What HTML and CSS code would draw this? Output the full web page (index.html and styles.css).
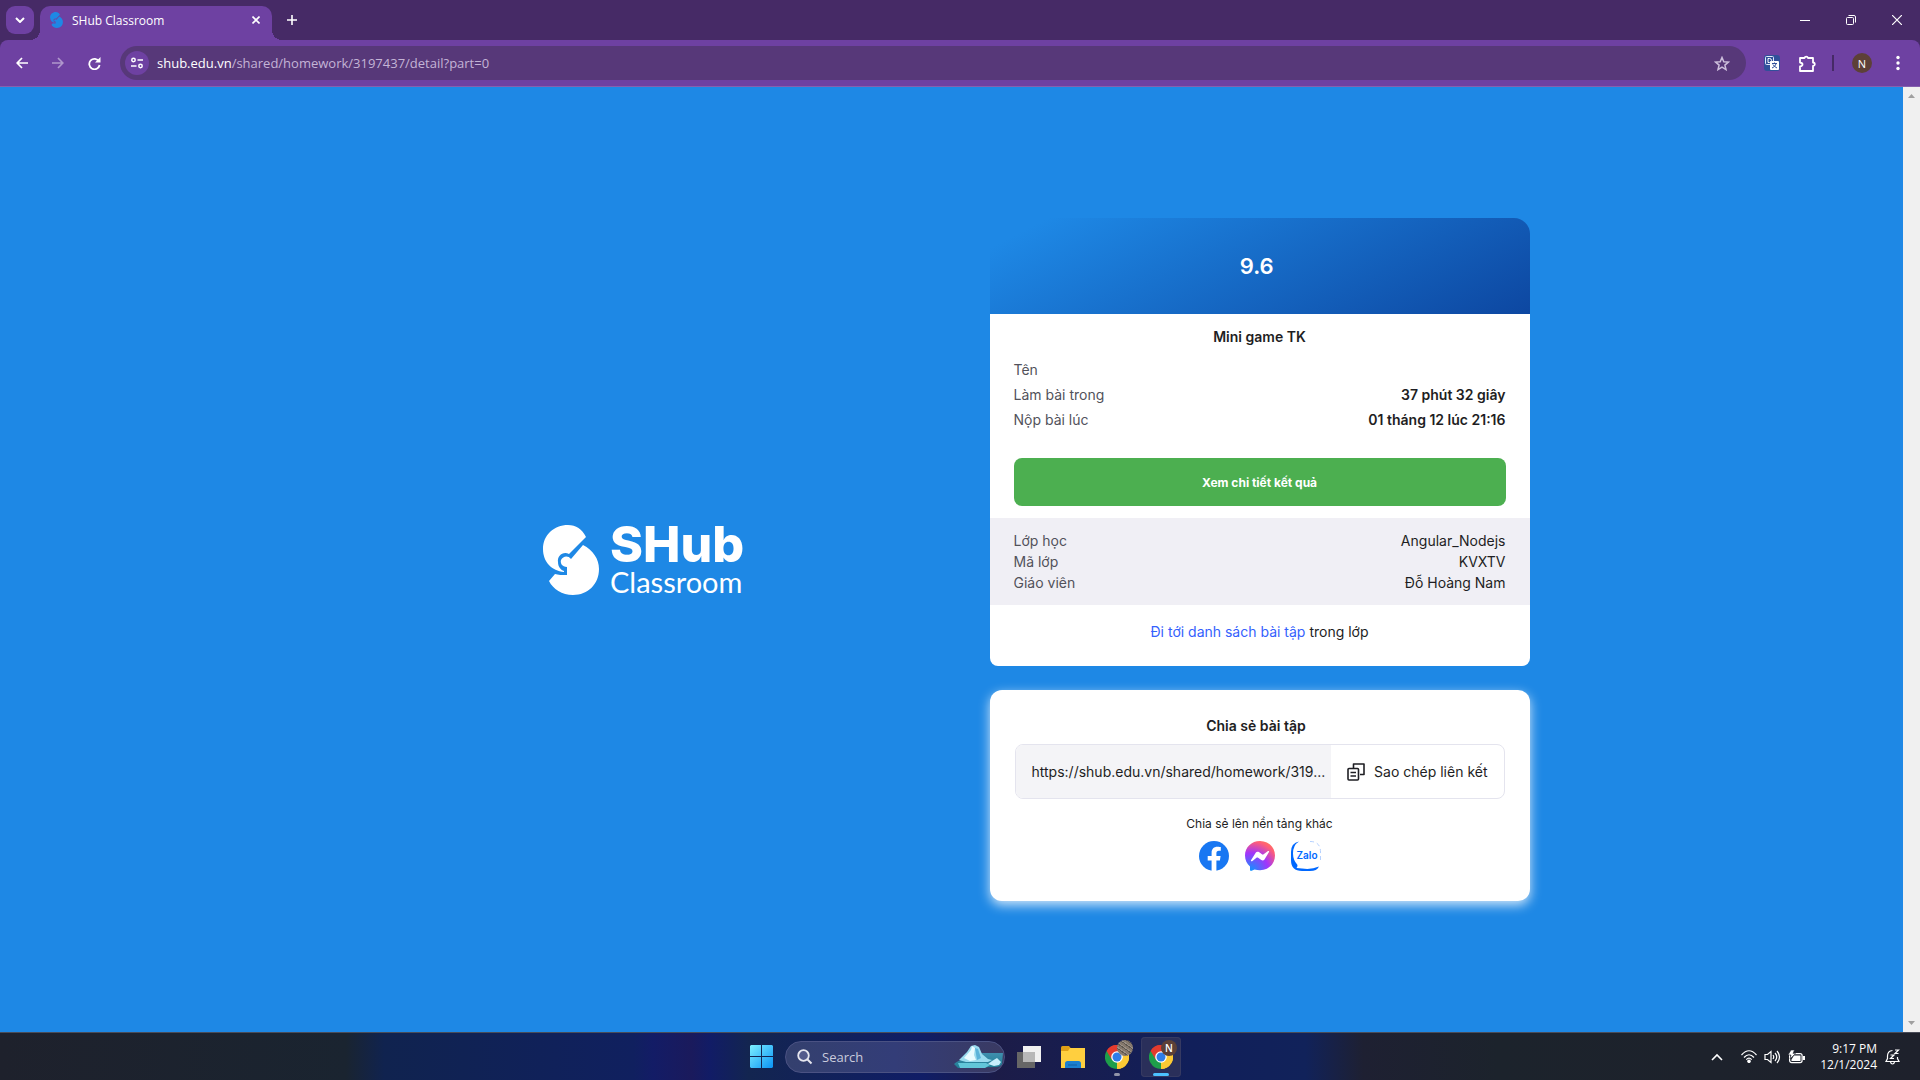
FILE: index.html
```html
<!DOCTYPE html>
<html lang="vi">
<head>
<meta charset="utf-8">
<title>SHub Classroom</title>
<link rel="stylesheet" href="styles.css">
</head>
<body>
<svg width="0" height="0" class="defs" aria-hidden="true">
  <defs>
    <symbol id="shub" viewBox="0 0 56 70">
      <path d="M43 12 26 29C20 26 14 31 15 37C15 42 18 45 21 46V47C9 46 0 37 0 24C0 10 11 0 25 0C33 0 39 4 43 12Z"/>
      <path d="M40 20C50 25 56 34 56 44C56 59 45 70 30 70C19 70 10 64 6 56L12 49C15 50 19 50 24 50V42C19 42 17 38 18 35C20 31 25 30 28 34Z"/>
    </symbol>
    <symbol id="chrome" viewBox="0 0 24 24">
      <path fill="#e33b2e" d="M12 12 1.6 6A12 12 0 0 1 22.4 6Z"/>
      <path fill="#fcc934" d="M12 12 22.4 6A12 12 0 0 1 12 24Z"/>
      <path fill="#1e9e4a" d="M12 12 12 24A12 12 0 0 1 1.6 6Z"/>
      <path fill="#e33b2e" d="M12 6.5H22.7A12 12 0 0 0 1.6 6L7 15Z"/>
      <path fill="#fcc934" d="M12 6.5H22.7A12 12 0 0 1 12 24L17 15Z"/>
      <circle cx="12" cy="12" r="5.8" fill="#fff"/><circle cx="12" cy="12" r="4.5" fill="#2f7de9"/>
    </symbol>
  </defs>
</svg>

<header class="browser">
  <div class="tabstrip">
    <button class="tab-search" aria-label="Search tabs"><svg width="10" height="6" viewBox="0 0 10 6"><path d="m1 1 4 4 4-4" fill="none" stroke="#fff" stroke-width="2"/></svg></button>
    <div class="tab">
      <svg class="favicon" width="13" height="16"><use href="#shub"/></svg>
      <span class="tab-title">SHub Classroom</span>
      <button class="icon-btn tab-close" aria-label="Close tab"><svg width="8" height="8" viewBox="0 0 8 8"><path d="m.5.5 7 7m0-7-7 7" stroke="#fff" stroke-width="1.6"/></svg></button>
    </div>
    <button class="icon-btn new-tab" aria-label="New tab"><svg width="10" height="10" viewBox="0 0 10 10"><path d="M5 0v10M0 5h10" stroke="#fff" stroke-width="1.6"/></svg></button>
    <div class="window-controls">
      <button aria-label="Minimize"><svg width="10" height="10"><path d="M0 5.500h10" stroke="#fff"/></svg></button>
      <button aria-label="Restore"><svg width="10" height="10" viewBox="0 0 10 10" fill="none" stroke="#fff"><rect x=".5" y="2.500" width="7" height="7" rx="1"/><path d="M2.500.5H8A1.500 1.500 0 0 1 9.500 2v5.500"/></svg></button>
      <button aria-label="Close"><svg width="10" height="10" viewBox="0 0 10 10"><path d="m0 0 10 10M10 0 0 10" stroke="#fff" stroke-width="1.200"/></svg></button>
    </div>
  </div>
  <div class="toolbar">
    <button class="icon-btn" aria-label="Back"><svg width="12" height="12" viewBox="0 0 12 12"><path d="M12 6H1.500M6 1 1.200 6 6 11" fill="none" stroke="#fff" stroke-width="1.700"/></svg></button>
    <button class="icon-btn dim" aria-label="Forward" disabled><svg width="12" height="12" viewBox="0 0 12 12"><path d="M0 6h10.500M6 1l4.800 5L6 11" fill="none" stroke="#fff" stroke-width="1.700"/></svg></button>
    <button class="icon-btn" aria-label="Reload"><svg width="13" height="13" viewBox="0 0 13 13"><path d="M11 4.500A5.200 5.200 0 1 0 11.600 8" fill="none" stroke="#fff" stroke-width="1.800"/><path d="M12.500 0v5.500H7Z" fill="#fff"/></svg></button>
    <div class="omnibox">
      <button class="site-info" aria-label="View site information"><svg width="12" height="12" viewBox="0 0 12 12" fill="none" stroke="#fff" stroke-width="1.500"><circle cx="2.500" cy="3" r="1.700"/><path d="M6.500 3H12M0 9h5.500"/><circle cx="9.500" cy="9" r="1.700"/></svg></button>
      <div class="url"><span>shub.edu.vn</span>/shared/homework/3197437/detail?part=0</div>
      <button class="icon-btn star" aria-label="Bookmark this tab"><svg width="16" height="15" viewBox="0 0 16 15"><path d="m8 1.500 1.800 4.200 4.600.4-3.500 3 1.100 4.500L8 11.200l-4 2.400 1.100-4.500-3.500-3 4.600-.4Z" fill="none" stroke="#cdbfdc" stroke-width="1.500"/></svg></button>
    </div>
    <div class="extensions">
      <button class="icon-btn" aria-label="Translate extension"><svg width="16" height="16" viewBox="0 0 16 16"><rect width="16" height="16" rx="3" fill="#31509a"/><rect x="1.500" y="1.500" width="8" height="8" rx="1" fill="#31509a" stroke="#dfe8fa"/><path d="M4 3.500h1.500q2 0 2 2t-2 2H4Z" fill="none" stroke="#fff"/><rect x="6" y="6" width="9" height="9" rx="1" fill="#fff"/><path d="M8 8.500h5M10.500 7.500v1M12 9q-1 3-4 4M9 9.500q1 2 4 3.500" fill="none" stroke="#31509a"/></svg></button>
      <button class="icon-btn" aria-label="Extensions"><svg width="18" height="17" viewBox="0 0 18 17"><path d="M2 3h4.500a1.800 1.800 0 0 1 3.500 0h5v4.500a1.700 1.700 0 0 1 0 3.500v5H2v-4.500q2.500-.5 2.500-2T2 7.500Z" fill="none" stroke="#fff" stroke-width="1.800" stroke-linejoin="round"/></svg></button>
      <span class="divider"></span>
      <button class="profile" aria-label="Profile">N</button>
      <button class="icon-btn" aria-label="Menu"><svg width="4" height="16" fill="#fff"><circle cx="2" cy="2.500" r="1.700"/><circle cx="2" cy="8" r="1.700"/><circle cx="2" cy="13.500" r="1.700"/></svg></button>
    </div>
  </div>
</header>

<div class="viewport">
  <main class="page">
    <div class="brand">
      <svg class="brand-mark" width="56" height="70"><use href="#shub"/></svg>
      <div class="brand-name"><span class="brand-top">SHub</span><span class="brand-sub">Classroom</span></div>
    </div>
    <div class="cards">
      <section class="result">
        <div class="score">9.6&nbsp;</div>
        <div class="result-body">
          <h1 class="title">Mini game TK</h1>
          <dl class="facts">
            <div><dt>Tên</dt><dd></dd></div>
            <div><dt>Làm bài trong</dt><dd>37 phút 32 giây</dd></div>
            <div><dt>Nộp bài lúc</dt><dd>01 tháng 12 lúc 21:16</dd></div>
          </dl>
          <button class="details">Xem chi tiết kết quả</button>
        </div>
        <dl class="class-info">
          <div><dt>Lớp học</dt><dd>Angular_Nodejs</dd></div>
          <div><dt>Mã lớp</dt><dd>KVXTV</dd></div>
          <div><dt>Giáo viên</dt><dd>Đỗ Hoàng Nam</dd></div>
        </dl>
        <p class="more"><a href="#">Đi tới danh sách bài tập</a> trong lớp</p>
      </section>
      <section class="share">
        <h2 class="title">Chia sẻ bài tập&nbsp;&nbsp;</h2>
        <div class="copy-box">
          <input class="share-url" type="text" readonly aria-label="Liên kết bài tập" value="https://shub.edu.vn/shared/homework/319...">
          <button class="copy"><svg width="18" height="18" viewBox="0 0 18 18" fill="none" stroke="#1e1e23" stroke-width="1.600" stroke-linejoin="round"><path d="M6.500 5V1h10.500v10.500h-4"/><rect x="1" y="5.500" width="10.500" height="11.500" rx="1"/><path d="M3.500 9.500h5.500M3.500 13h5.500"/></svg>Sao chép liên kết</button>
        </div>
        <p class="other">Chia sẻ lên nền tảng khác</p>
        <div class="socials">
          <a href="#" aria-label="Facebook"><svg width="30" height="30" viewBox="0 0 30 30"><circle cx="15" cy="15" r="15" fill="#1877f2"/><path fill="#fff" d="M12.600 30V19.400H8.700V15h3.900v-3.300c0-3.900 2.300-6 5.800-6 1.700 0 3.400.3 3.400.3v3.700h-1.900c-1.900 0-2.500 1.200-2.500 2.400V15h4.200l-.7 4.400h-3.500V30Z"/></svg></a>
          <a href="#" aria-label="Messenger"><svg width="30" height="30" viewBox="0 0 30 30"><defs><radialGradient id="msg" cx=".19" cy="1" r="1.100"><stop offset="0" stop-color="#0a96ff"/><stop offset=".55" stop-color="#a334fa"/><stop offset=".9" stop-color="#ff5f77"/><stop offset="1" stop-color="#ff7061"/></radialGradient></defs><path fill="url(#msg)" d="M15 0C6.500 0 0 6.200 0 14.500c0 4.500 1.900 8.300 5 11v3.300c0 1 .8 1.400 1.600 1l3-1.300c1.700.5 3.500.7 5.400.7 8.500 0 15-6.200 15-14.700S23.500 0 15 0Z"/><path fill="#fff" d="m6 19.200 4.700-7.500c.7-1.100 2.200-1.400 3.200-.6l3.400 2.500c.3.200.7.200 1 0l4.700-3.500c.6-.5 1.500.3 1 1l-4.500 7.400c-.7 1.100-2.200 1.400-3.200.6l-3.500-2.500c-.3-.2-.7-.2-1 0L7.100 20.200c-.7.400-1.500-.3-1.100-1Z"/></svg></a>
          <a href="#" aria-label="Zalo"><svg width="30" height="30" viewBox="0 0 30 30"><path fill="#0068ff" d="M8 .5Q0 2 0 11v8Q0 30 11 30h8Q26 30 28 25.500 20 29 11 27.500L5.500 27q1-1 1-3Q2 19 2 12.500 2 4 8 .5Z"/><path d="M19 .5q10.500 0 10.500 10.500v8" fill="none" stroke="#b5d1ff" stroke-dasharray="4 3"/><text x="16" y="18" text-anchor="middle" class="zalo-word">Zalo</text></svg></a>
        </div>
      </section>
    </div>
  </main>
  <div class="scrollbar" aria-hidden="true">
    <svg width="7" height="4"><path d="M0 4 3.500 0 7 4Z" fill="#a0a0a0"/></svg>
    <svg width="7" height="4"><path d="M0 0h7L3.500 4Z" fill="#a0a0a0"/></svg>
  </div>
</div>

<footer class="taskbar">
  <div></div>
  <div class="apps">
    <button class="app" aria-label="Start"><svg width="23" height="23" viewBox="0 0 23 23"><defs><linearGradient id="win" x2="1" y2="1"><stop stop-color="#7df0ff"/><stop offset="1" stop-color="#0a93f5"/></linearGradient></defs><path fill="url(#win)" d="M1 0h10v11H0V1Zm11 0h10l1 1v10H12ZM0 12h11v11H1l-1-1Zm12 0h11v10l-1 1H12Z"/></svg></button>
    <button class="search">
      <svg width="16" height="16" viewBox="0 0 16 16"><circle cx="6.500" cy="6.500" r="5.300" fill="#545b8c" stroke="#e6e6ef" stroke-width="1.800"/><path d="m10.500 10.500 4 4" stroke="#e6e6ef" stroke-width="2"/></svg>
      <span>Search</span>
      <svg class="iceberg" width="50" height="26" viewBox="0 0 50 26"><defs><linearGradient id="ice" x2="0" y2="1"><stop stop-color="#3f8fae"/><stop offset="1" stop-color="#1f7d94"/></linearGradient></defs><path fill="url(#ice)" d="M28 9h21l-1 11q-2 3-6 3L4 24l-4-4q4-4 12-5Z"/><path fill="#9adbee" d="M5 16 13 8l4-6 4-1 4 2 3 7 6 5 4 1-4 2H12Z"/><path fill="#e9fbff" d="m10 14 7-8 1-4 3 2-1 7 2 5-6 1Z"/><path fill="#5bb3d9" d="m21 4 3 1 3 9-4 2Z"/><path fill="#62c6d9" d="M4 19h28l4 2-5 3H6Z"/><path fill="#c7eefb" d="m34 20 4-3 5-3 4 4-2 3-5 1Z"/></svg>
    </button>
    <button class="app" aria-label="Task view"><svg width="24" height="22" viewBox="0 0 24 22"><path fill="#f1f1f1" d="M6 0h18v16H6Z"/><path fill="#666" d="M0 6h18v16H0Z"/><path fill="#b8b8b8" d="M6 6h12v10H6Z"/></svg></button>
    <button class="app" aria-label="File Explorer"><svg width="24" height="22" viewBox="0 0 24 22"><path fill="#e0a016" d="M0 1.500Q0 0 1.500 0H8l2 2.500V8H0Z"/><path fill="#ffcf3f" d="M9 2h15v20H0V5h7Z"/><path fill="#1b7fd0" d="M4 22v-4.500Q4 15 6.500 15h11q2.500 0 2.500 2.500V22Z"/><path fill="#125ea5" d="M7 18.500h9v1H7Z"/></svg></button>
    <button class="app" aria-label="Chrome"><svg width="24" height="24"><use href="#chrome"/></svg><span class="badge photo"></span><span class="running"></span></button>
    <button class="app active" aria-label="Chrome, profile N"><svg width="24" height="24"><use href="#chrome"/></svg><span class="badge">N</span><span class="running on"></span></button>
  </div>
  <div class="tray">
    <button class="tray-btn up" aria-label="Show hidden icons"><svg width="12" height="8" viewBox="0 0 12 8"><path d="m1 7 5-5 5 5" fill="none" stroke="#fff" stroke-width="1.600"/></svg></button>
    <button class="tray-btn status" aria-label="Network, volume and battery">
      <svg width="16" height="13" viewBox="0 0 16 13" fill="none" stroke="#fff" stroke-width="1.200"><path d="M.5 5Q8-3.500 15.500 5M3 7.500q5-5.500 10 0M5.300 9.700q2.700-3 5.400 0"/><circle cx="8" cy="11.300" r="1.200" fill="#fff"/></svg>
      <svg width="17" height="14" viewBox="0 0 17 14" fill="none" stroke="#fff" stroke-width="1.200"><path d="M1 4.500h2.500L7 1.500v11L3.500 9.500H1Z"/><path d="M9 5q1.500 2 0 4M11 3q3.500 4 0 8M13 1q5 6 0 12"/></svg>
      <svg width="17" height="14" viewBox="0 0 17 14"><rect x="1.600" y="3.600" width="12.500" height="9" rx="2" fill="none" stroke="#fff" stroke-width="1.200"/><path fill="#fff" d="M6 5.500h6.500v5.500H3.500V9.500ZM14.800 6H17v4h-2.200Z"/><path fill="#fff" stroke="#1b202c" stroke-width=".6" d="M3 0h3.500L5 3.500h2.500L2 9l1-4H0Z"/></svg>
    </button>
    <button class="tray-btn clock"><span>9:17 PM</span><span>12/1/2024</span></button>
    <button class="tray-btn bell" aria-label="Notifications"><svg width="15" height="16" viewBox="0 0 15 16" fill="none" stroke="#fff" stroke-width="1.200"><path d="M7.500 1.500Q2.500 2 2.500 7v2.500L1 12.500h13l-1.500-3V8M5.500 13q.5 2 2 2t2-2M10 1h3.500L10 4.500h3.500M5.500 6h3.500l-3.500 3.500H9"/></svg></button>
  </div>
</footer>
</body>
</html>
```
FILE: styles.css
```css
* { box-sizing: border-box; }
body {
  margin: 0;
  height: 100vh;
  display: flex;
  flex-direction: column;
  overflow: hidden;
  background: #1e88e5;
  font-family: Inter, "Liberation Sans", sans-serif;
  color: #1e1e23;
}
.defs { position: absolute; }
h1, h2, p, dl, dd { margin: 0; }
button, input {
  padding: 0;
  border: 0;
  background: none;
  color: inherit;
  font: inherit;
}
svg { display: block; flex: none; }
a { text-decoration: none; }

/* Browser frame */
.browser, .taskbar { font-family: "Open Sans", "Noto Sans", sans-serif; color: #fff; }
.browser { background: #462a66; flex: none; }
.tabstrip {
  display: flex;
  align-items: center;
  height: 40px;
  padding-left: 6px;
}
.tab-search {
  display: grid;
  place-items: center;
  width: 28px;
  height: 28px;
  margin-right: 6px;
  border-radius: 9px;
  background: #6e41a2;
}
.tab {
  position: relative;
  align-self: flex-end;
  display: flex;
  align-items: center;
  width: 232px;
  height: 34px;
  padding: 0 8px 6px 10px;
  border-radius: 10px 10px 0 0;
  background: #6e41a2;
}
.tab::before, .tab::after {
  content: "";
  position: absolute;
  bottom: 0;
  width: 10px;
  height: 10px;
}
.tab::before { left: -10px; background: radial-gradient(circle at 0 0, transparent 10px, #6e41a2 10px); }
.tab::after { right: -10px; background: radial-gradient(circle at 100% 0, transparent 10px, #6e41a2 10px); }
.favicon { fill: #1e88e5; }
.tab-title { flex: 1; margin-left: 9px; font-size: 12px; }
.icon-btn { display: grid; place-items: center; width: 16px; height: 28px; flex: none; }
.dim { opacity: .45; }
.new-tab { margin-left: 12px; }
.window-controls { display: flex; margin-left: auto; }
.window-controls button { display: grid; place-items: center; width: 46px; height: 40px; }
.toolbar {
  display: flex;
  align-items: center;
  gap: 20px;
  height: 47px;
  padding: 0 14px;
  border-radius: 8px 8px 0 0;
  border-bottom: 1px solid #8560ae;
  background: #6e41a2;
}
.omnibox {
  flex: 1;
  display: flex;
  align-items: center;
  height: 34px;
  margin: 0 -2px;
  padding: 0 16px 0 5px;
  border-radius: 17px;
  background: #573879;
}
.site-info {
  display: grid;
  place-items: center;
  width: 24px;
  height: 24px;
  border-radius: 50%;
  background: #6e41a2;
}
.url { flex: 1; margin-left: 8px; font-size: 13px; color: #c4b4d6; }
.url span { color: #fff; }
.extensions { display: flex; align-items: center; gap: 18px; }
.divider { width: 2px; height: 16px; background: #462a66; }
.profile {
  width: 20px;
  height: 20px;
  border-radius: 50%;
  background: #5d4037;
  font-size: 11px;
}

/* Page */
.viewport { flex: 1; display: flex; min-height: 0; }
.page {
  flex: 1;
  display: grid;
  grid-template-columns: repeat(2, minmax(0, 616px));
  justify-content: center;
  place-items: center;
  align-content: center;
}
.scrollbar {
  display: flex;
  flex-direction: column;
  justify-content: space-between;
  align-items: center;
  width: 17px;
  padding: 7px 0;
  background: #f0f0f0;
}
.brand { display: flex; align-items: center; gap: 11px; color: #fff; }
.brand-mark { fill: #fff; }
.brand-name { display: flex; flex-direction: column; }
.brand-top { font-size: 50px; line-height: 44px; font-weight: 800; }
.brand-sub { font-family: Lato, Inter, sans-serif; font-size: 29px; line-height: 32px; }
.cards { display: flex; flex-direction: column; gap: 24px; width: 100%; max-width: 540px; }
.result { font-size: 14px; }
.score {
  height: 96px;
  border-radius: 16px 16px 0 0;
  background: linear-gradient(153deg, #1e88e5 8%, #0d47a1);
  color: #fff;
  font-size: 22px;
  line-height: 96px;
  font-weight: 600;
  text-align: center;
}
.result-body { padding: 12px 24px; background: #fff; }
.title { font-size: 14px; line-height: 22px; font-weight: 600; text-align: center; }
.facts { margin: 9px 0 26px; line-height: 25px; }
.facts div, .class-info div { display: flex; justify-content: space-between; }
dt { color: #52525b; }
.facts dd { font-weight: 600; }
.details {
  display: block;
  width: 100%;
  height: 48px;
  border-radius: 8px;
  background: #4caf50;
  color: #fff;
  font-size: 12px;
  font-weight: 700;
}
.class-info { padding: 12px 24px; background: #f0eff5; line-height: 21px; }
.more {
  padding: 16px 24px 24px;
  border-radius: 0 0 8px 8px;
  background: #fff;
  line-height: 21px;
  text-align: center;
}
.more a { color: #3461fd; }
.share {
  padding: 25px;
  border-radius: 12px;
  background: #fff;
  box-shadow: 0 4px 12px rgba(255, 255, 255, .8);
  text-align: center;
}
.copy-box {
  display: flex;
  height: 55px;
  margin-top: 7px;
  overflow: hidden;
  border: 1px solid #e4e4ee;
  border-radius: 8px;
  font-size: 14px;
}
.share-url {
  flex: 1;
  min-width: 0;
  padding: 0 4px 0 16px;
  background: #f4f4f7;
  text-overflow: ellipsis;
}
.copy { display: flex; align-items: center; gap: 9px; padding: 0 16px; white-space: nowrap; }
.other { margin-top: 16px; font-size: 12px; line-height: 18px; }
.socials { display: flex; justify-content: center; gap: 16px; margin: 8px 0 5px; }
.zalo-word { fill: #0068ff; font: 600 10px Inter, sans-serif; }

/* Taskbar */
.taskbar {
  flex: none;
  display: grid;
  grid-template-columns: 1fr auto 1fr;
  align-items: center;
  height: 48px;
  border-top: 1px solid #4a4c58;
  background: linear-gradient(90deg, #1e212c, #1a2430 18%, #10234f 20%, #10205f 33%, #131c66 34%, #1a1a5c 36%, #111c66 37%, #132550 39%, #101d66 48%, #1c1c48 52%, #111f5a 62%, #11225a 68%, #1e2032 71%, #1c232c 78%, #1e212c);
}
.apps { display: flex; align-items: center; gap: 4px; padding-left: 2px; }
.app { position: relative; display: grid; place-items: center; width: 40px; height: 40px; border-radius: 4px; }
.active { background: #2a2f5a; box-shadow: inset 0 0 0 1px #363a62; }
.search {
  position: relative;
  display: flex;
  align-items: center;
  gap: 9px;
  width: 220px;
  height: 32px;
  padding-left: 11px;
  border: 1px solid #4b5283;
  border-radius: 16px;
  background: linear-gradient(90deg, #34406e, #333d78 50%, #3a3a62);
  color: #c9cbdc;
  font-size: 13px;
}
.iceberg { margin-left: auto; }
.badge {
  position: absolute;
  top: 3px;
  right: 4px;
  width: 16px;
  height: 16px;
  border-radius: 50%;
  background: #5d4037;
  font-size: 10px;
  line-height: 16px;
  font-weight: 600;
}
.photo { background: repeating-linear-gradient(35deg, #85786c 0 2px, #5e574f 2px 3px, #9a9086 3px 4px); }
.running { position: absolute; bottom: 1px; width: 6px; height: 3px; border-radius: 2px; background: #9194a8; }
.running.on { width: 16px; background: #4cc2ff; }
.tray { display: flex; justify-content: flex-end; align-items: center; padding-right: 20px; font-size: 12px; }
.up { margin-right: 18px; }
.status { display: flex; align-items: center; gap: 7px; margin-right: 15px; }
.clock { display: flex; flex-direction: column; align-items: flex-end; margin-right: 8px; line-height: 16px; }
```
